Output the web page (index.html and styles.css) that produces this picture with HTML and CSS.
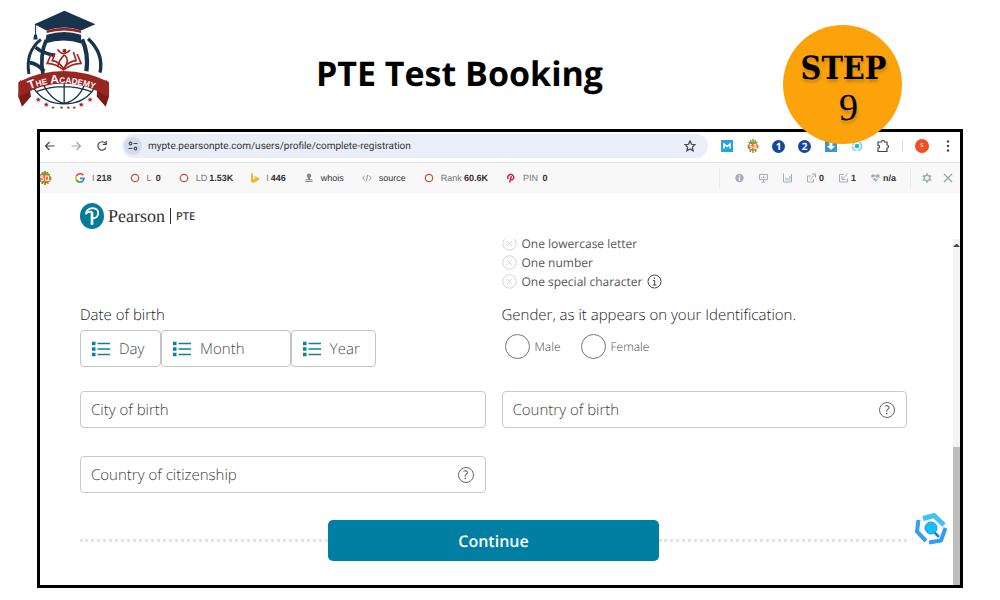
FILE: index.html
```html
<!DOCTYPE html>
<html lang="en">
<head>
  <meta charset="UTF-8">
  <meta name="viewport" content="width=device-width, initial-scale=1.0">
  <title>PTE Test Booking</title>
  <link rel="stylesheet" href="styles.css">
</head>
<body>
  <header class="top">
    <svg class="academy" viewBox="50 30 280 300" role="img" aria-label="The Academy">
      <!-- globe -->
      <g fill="none" stroke="#17344c">
        <path d="M122 118Q74 156 86 222" stroke-width="9"/>
        <path d="M138 120Q118 165 128 222" stroke-width="11"/>
        <path d="M246 118Q266 160 259 214" stroke-width="13"/>
        <path d="M264 116Q312 160 300 218" stroke-width="10"/>
        <path d="M106 142Q128 160 164 166M88 188Q110 190 132 214" stroke-width="11"/>
        <path d="M100 264Q130 312 192 312Q252 312 282 266M128 250Q150 300 192 311Q236 300 254 252M192 236V312M106 276Q190 244 276 276" stroke-width="4"/>
      </g>
      <!-- cap -->
      <path d="M102 72L193 32L286 72L243 91Q193 74 139 91Z" fill="#17344c"/>
      <path d="M106 72V104" stroke="#17344c" stroke-width="3"/>
      <path d="M102 103h8l2 15h-13z" fill="#17344c"/>
      <path d="M139 91Q193 75 243 91V99Q193 83 139 99Z" fill="#98241f"/>
      <path d="M139 104Q193 88 243 104V130Q193 112 134 130Z" fill="#17344c"/>
      <!-- book and reader -->
      <g fill="none" stroke="#a3251f" stroke-width="5">
        <path d="M153 162L141 190Q166 190 190 210Q216 190 243 190L231 162"/>
        <path d="M164 160L156 182Q176 184 190 206Q204 184 228 182L220 156"/>
        <path d="M172 148Q188 172 210 150M193 164Q176 182 173 198M194 166Q210 178 192 206"/>
      </g>
      <circle cx="193" cy="152" r="6" fill="#a3251f"/>
      <!-- ribbon -->
      <path d="M60 240L54 290L65 321L92 290L88 262ZM320 240L327 290L317 321L290 290L292 262Z" fill="#7d1a18"/>
      <path d="M54 246Q190 180 327 246V294L322 289Q190 212 60 289L54 294Z" fill="#9a2622"/>
      <path id="ribbon" d="M88 268Q190 226 310 278" fill="none"/>
      <text class="academy-name"><textPath href="#ribbon">The Academy</textPath></text>
      <g class="stars">
        <text x="104" y="306">★</text><text x="128" y="320">★</text><text x="152" y="327" class="tiny">★</text>
        <text x="178" y="328" class="tiny">★</text><text x="198" y="328" class="tiny">★</text><text x="216" y="327" class="tiny">★</text>
        <text x="234" y="320">★</text><text x="260" y="306">★</text>
      </g>
    </svg>
    <h1>PTE Test Booking</h1>
    <div class="step"><span class="step-word">STEP</span><span class="step-number">9</span></div>
  </header>

  <main class="browser">
    <div class="toolbar">
      <button class="icon-btn" aria-label="Back"><svg width="12" height="12" viewBox="0 0 12 12"><path d="M10.500 6H2M5.500 2L1.500 6l4 4" class="line"/></svg></button>
      <button class="icon-btn pale" aria-label="Forward"><svg width="12" height="12" viewBox="0 0 12 12"><path d="M1.500 6H10M6.500 2l4 4-4 4" class="line"/></svg></button>
      <button class="icon-btn" aria-label="Reload"><svg width="12" height="12" viewBox="0 0 12 12"><path d="M10 7.500A4.200 4.200 0 1 1 9.500 3.500M10.200 1v3.500H6.800" class="line"/></svg></button>
      <div class="address">
        <span class="site"><svg width="10" height="10" viewBox="0 0 10 10"><g class="line"><circle cx="2.500" cy="2.500" r="1.300"/><path d="M5.500 2.500h4M.500 7.500h4"/><circle cx="7.500" cy="7.500" r="1.300"/></g></svg></span>
        <input type="text" aria-label="Address" value="mypte.pearsonpte.com/users/profile/complete-registration">
        <button class="icon-btn" aria-label="Bookmark"><svg width="12" height="12" viewBox="0 0 12 12"><path d="M6 1l1.500 3.300 3.500.400-2.600 2.400.700 3.600L6 8.900l-3.100 1.800.700-3.600L1 4.700l3.500-.400z" class="line"/></svg></button>
      </div>
      <button class="icon-btn" aria-label="Mail extension"><svg width="14" height="14" viewBox="0 0 14 14"><path fill="#2ba3d8" d="M1 1h12v12H1z"/><path d="M4 9.500V5l3 2.500L10 5v4.500" stroke="#fff" stroke-width="1.500" fill="none"/></svg></button>
      <button class="icon-btn" aria-label="SEO extension"><svg width="14" height="14" viewBox="0 0 14 14"><path d="M4.500 1l1 3M9.500 1l-1 3M7 0v4M2.500 3l3 2M11.500 3l-3 2M4 13l1-3M10 13l-1-3M7 14v-4" stroke="#5cab36" stroke-width="1.500"/><ellipse cx="7" cy="7.500" rx="5.500" ry="4" fill="#f26a21"/><path d="M6 5.500H4v2h2v2H4M8 5.500h2v4H8zM9.500 8.500l1 1.500" stroke="#fff" fill="none"/></svg></button>
      <button class="icon-btn" aria-label="Extension one"><span class="num">1</span></button>
      <button class="icon-btn" aria-label="Extension two"><span class="num">2</span></button>
      <button class="icon-btn" aria-label="Download extension"><svg width="14" height="14" viewBox="0 0 14 14"><path fill="#3b96d6" d="M1 1h12v12H1z"/><path d="M5.500 3h3v4H11l-4 4-4-4h2.500z" fill="#fff"/></svg></button>
      <button class="icon-btn" aria-label="Search extension"><svg width="14" height="14" viewBox="0 0 14 14"><circle cx="7" cy="7" r="4.500" fill="none" stroke="#7bcff0" stroke-width="1.500" stroke-dasharray="6 1.500"/><circle cx="7" cy="7" r="2.300" fill="#24b3ee"/></svg></button>
      <button class="icon-btn" aria-label="Extensions"><svg width="14" height="14" viewBox="0 0 14 14"><path d="M2 3h3.500a1.500 1.500 0 0 1 3 0H11v3a1.500 1.500 0 0 1 0 3v3.500H2V9.200a1.500 1.500 0 0 0 0-3z" class="line"/></svg></button>
      <span class="divider"></span>
      <button class="icon-btn" aria-label="Profile"><span class="avatar">s</span></button>
      <button class="icon-btn" aria-label="Menu"><svg width="14" height="14" viewBox="0 0 14 14" fill="#444"><circle cx="7" cy="2.500" r="1.200"/><circle cx="7" cy="7" r="1.200"/><circle cx="7" cy="11.500" r="1.200"/></svg></button>
    </div>

    <div class="seobar">
      <svg class="seo-logo" width="12" height="14" viewBox="2 0 12 14"><path d="M4.500 1l1 3M9.500 1l-1 3M7 0v4M2.500 3l3 2M11.500 3l-3 2M4 13l1-3M10 13l-1-3M7 14v-4" stroke="#5cab36" stroke-width="2"/><ellipse cx="7" cy="7.500" rx="6.500" ry="4.500" fill="#f26a21"/><path d="M5.500 5H3v2h2.500v2.500H3M7.500 5h3v4.500h-3zM9.500 8l2 2" stroke="#fff" fill="none"/></svg>
      <div class="stats">
        <span class="stat"><svg width="10" height="10" viewBox="0 0 10 10" fill="none" stroke-width="1.700"><path d="M8.300 2.200A4 4 0 0 0 1.500 3" stroke="#e24a3b"/><path d="M1.500 3a4 4 0 0 0 0 4" stroke="#f2b824"/><path d="M1.500 7A4 4 0 0 0 7.700 8" stroke="#38a457"/><path d="M7.700 8A4 4 0 0 0 9 5.300H5" stroke="#4285d8"/></svg><span>I<b>218</b></span></span>
        <span class="stat"><svg width="10" height="10" viewBox="0 0 10 10"><circle cx="5" cy="5" r="3.700" class="ring"/></svg><span>L <b>0</b></span></span>
        <span class="stat"><svg width="10" height="10" viewBox="0 0 10 10"><circle cx="5" cy="5" r="3.700" class="ring"/></svg><span>LD<b>1.53K</b></span></span>
        <span class="stat"><svg width="8" height="10" viewBox="0 0 8 10"><path d="M0 0l2 .800v5.500l2.300-1L3 3l5 2v2L2 10 0 8.800z" fill="#f0b92d"/></svg><span>I<b>446</b></span></span>
        <span class="stat"><svg width="10" height="10" viewBox="0 0 10 10" fill="#7d8b8b"><circle cx="5" cy="2.700" r="2.200"/><path d="M4 4.500h2v1.700h2.500v1h-7v-1H4zM1.500 8h7v1h-7z"/></svg><span class="dark">whois</span></span>
        <span class="stat"><svg width="10" height="10" viewBox="0 0 10 10"><path d="M3 2.500L.800 5 3 7.500M7 2.500L9.200 5 7 7.500M5.700 2L4.300 8" fill="none" stroke="#8b9494"/></svg><span class="dark">source</span></span>
        <span class="stat"><svg width="10" height="10" viewBox="0 0 10 10"><circle cx="5" cy="5" r="3.700" class="ring"/></svg><span>Rank<b>60.6K</b></span></span>
        <span class="stat"><svg width="10" height="10" viewBox="0 0 10 10" fill="none" stroke="#c22b43"><path d="M2.200 6A3 3 0 1 1 7.500 5.500Q6.500 7.500 5 6.300M5.300 3L3.700 9.500" stroke-width="1.500"/></svg><span>PIN <b>0</b></span></span>
      </div>
      <div class="tools">
        <svg width="9" height="10" viewBox="0 0 9 10"><circle cx="4.500" cy="5" r="4.200" fill="#a3b0b7"/><path d="M4.500 4.300V8M4.500 2.300v1.200" stroke="#fff" stroke-width="1.300"/></svg>
        <svg width="9" height="10" viewBox="0 0 9 10"><path d="M.500 1.500h8v5h-8zM4.500 6.500V9M2.500 9h4M3 5V4M4.500 5V3M6 5V4" class="gray"/></svg>
        <svg width="9" height="10" viewBox="0 0 9 10"><path d="M.500.500v8.500h8V1M3 7.500V4.500M5 7.500V5M7 7.500V3" class="gray"/></svg>
        <span class="tool"><svg width="9" height="10" viewBox="0 0 9 10"><path d="M4 3H.500v6h6V6M3 6.500L8.300 1.300M5 1h3.500v3.500" class="gray"/></svg><b>0</b></span>
        <span class="tool"><svg width="9" height="10" viewBox="0 0 9 10"><path d="M5 1.500H.500v7.500h8V5.500M8.500.700L3.500 6M3 3v3.500h3.500" class="gray"/></svg><b>1</b></span>
        <span class="tool"><svg width="9" height="10" viewBox="0 0 9 10"><path d="M4.500 9L.500 4.500Q-.500 1.500 2.300 1.300 4 1.200 4.500 2.800 5 1.200 6.700 1.300 9.500 1.500 8.500 4.500z" fill="#a3b0b7"/><path d="M1 5h2l1-1.500L5 6l1-1h2" stroke="#fff" fill="none"/></svg><b>n/a</b></span>
      </div>
      <div class="tools last">
        <svg width="10" height="10" viewBox="0 0 10 10"><circle cx="5" cy="5" r="2.700" fill="none" stroke="#a3b0b7" stroke-width="1.500"/><path d="M5 .300v1.700M5 8v1.700M.900 2.700l1.500.900M7.600 6.400l1.500.900M.900 7.300l1.500-.900M7.600 3.600l1.500-.900" stroke="#a3b0b7" stroke-width="2"/></svg>
        <svg width="10" height="10" viewBox="0 0 10 10"><path d="M1 1l8 8M9 1L1 9" fill="none" stroke="#98a4aa" stroke-width="1.300"/></svg>
      </div>
    </div>

    <div class="brand">
      <svg width="24" height="26" viewBox="0 0 24 26"><ellipse cx="12" cy="13" rx="12" ry="13" fill="#057b9b"/><path d="M6 10.500Q7 5.500 12.500 5.200Q18.500 5.500 18.200 10.500Q17.500 15.500 12.300 15.300M6 10.500Q8 8.500 11.500 8.700" fill="none" stroke="#fff" stroke-width="1.800" stroke-linecap="round"/><path d="M12 9v10.500" stroke="#fff" stroke-width="2.600"/><circle cx="12" cy="20.500" r="1.500" fill="#fff"/></svg>
      <span class="brand-name">Pearson</span><span class="brand-bar"></span><span class="brand-sub">PTE</span>
    </div>

    <div class="page">
      <form class="form">
        <ul class="rules">
          <li><svg width="15" height="15" viewBox="0 0 15 15" class="cross"><circle cx="7.500" cy="7.500" r="6.700"/><path d="M5 5l5 5M10 5l-5 5"/></svg>One lowercase letter</li>
          <li><svg width="15" height="15" viewBox="0 0 15 15" class="cross"><circle cx="7.500" cy="7.500" r="6.700"/><path d="M5 5l5 5M10 5l-5 5"/></svg>One number</li>
          <li><svg width="15" height="15" viewBox="0 0 15 15" class="cross"><circle cx="7.500" cy="7.500" r="6.700"/><path d="M5 5l5 5M10 5l-5 5"/></svg>One special character
            <svg width="15" height="15" viewBox="0 0 15 15" class="info"><circle cx="7.500" cy="7.500" r="6.500"/><path d="M6 6.500h1.700V11M5.800 11h3.700M7.500 3.500V5"/></svg></li>
        </ul>

        <fieldset class="birth">
          <legend>Date of birth</legend>
          <div class="dates">
            <label class="date day"><svg width="18" height="16" viewBox="0 0 18 16" class="list"><path d="M5.500 2.500H18M5.500 8H18M5.500 13.500H18"/><path d="M0 2.500h3.500M0 8h3.500M0 13.500h3.500" class="dots"/></svg><select aria-label="Day"><option>Day</option></select></label>
            <label class="date month"><svg width="18" height="16" viewBox="0 0 18 16" class="list"><path d="M5.500 2.500H18M5.500 8H18M5.500 13.500H18"/><path d="M0 2.500h3.500M0 8h3.500M0 13.500h3.500" class="dots"/></svg><select aria-label="Month"><option>Month</option></select></label>
            <label class="date year"><svg width="18" height="16" viewBox="0 0 18 16" class="list"><path d="M5.500 2.500H18M5.500 8H18M5.500 13.500H18"/><path d="M0 2.500h3.500M0 8h3.500M0 13.500h3.500" class="dots"/></svg><select aria-label="Year"><option>Year</option></select></label>
          </div>
        </fieldset>

        <fieldset class="gender">
          <legend>Gender, as it appears on your Identification.</legend>
          <div class="radios">
            <label><input type="radio" name="gender">Male</label>
            <label><input type="radio" name="gender">Female</label>
          </div>
        </fieldset>

        <div class="field"><input type="text" aria-label="City of birth" placeholder="City of birth"></div>
        <div class="field"><input type="text" aria-label="Country of birth" placeholder="Country of birth">
          <button type="button" class="help" aria-label="Help">?</button></div>
        <div class="field citizen"><input type="text" aria-label="Country of citizenship" placeholder="Country of citizenship">
          <button type="button" class="help" aria-label="Help">?</button></div>

        <div class="actions"><button type="button" class="continue">Continue</button></div>
      </form>
      <div class="scrollbar"><span class="up"></span><span class="thumb"></span></div>
    </div>

    <button class="finder" aria-label="Search"><svg width="34" height="34" viewBox="0 0 34 34">
      <g fill="none" stroke-width="4"><path d="M9 6.500L20 3.500 30 13" stroke="#43c3f3" stroke-width="5"/><path d="M4.500 8L3 19.500 12 29" stroke="#3a9bf0"/><path d="M15 30.500l12-2L31.500 16" stroke="#2f9df4"/></g>
      <path d="M20 20l5 5" stroke="#1880dc" stroke-width="2.500"/><circle cx="17" cy="16" r="6" fill="#12c1fb" stroke="#2496e8"/></svg></button>
  </main>
</body>
</html>
```
FILE: styles.css
```css
* {
  box-sizing: border-box;
}

body {
  margin: 0;
  background: #fff;
  color: #4a4a4a;
  font-family: "Open Sans", sans-serif;
  text-rendering: geometricPrecision;
}

button, input, select {
  font: inherit;
  color: inherit;
  margin: 0;
  padding: 0;
  border: none;
  background: none;
  text-rendering: inherit;
}

svg {
  display: block;
  flex: none;
}

/* Heading */
.top {
  position: relative;
  display: grid;
  grid-template-columns: 1fr auto 1fr;
  height: 129px;
  padding: 10px 98px 0 17px;
}

.academy {
  width: 93px;
  height: 100px;
}

.academy-name {
  font-family: "Liberation Sans", sans-serif;
  font-weight: bold;
  font-size: 36px;
  font-variant: small-caps;
  fill: #fff;
}

.stars {
  font-family: "DejaVu Sans", sans-serif;
  font-size: 22px;
  fill: #a3251f;
}

.stars .tiny {
  font-size: 14px;
}

h1 {
  margin: 0;
  padding-top: 39px;
  color: #000;
  font-size: 34px;
  font-weight: 700;
  line-height: 48px;
}

.step {
  position: absolute;
  top: 25px;
  right: 98px;
  z-index: 2;
  width: 119px;
  height: 119px;
  border-radius: 50%;
  background: #fca30b;
  color: #000;
  font-family: "Liberation Serif", serif;
  text-align: center;
  text-shadow: 1px 3px 3px rgba(0, 0, 0, 0.2);
}

.step-word, .step-number {
  display: block;
  line-height: 40px;
}

.step-word {
  padding: 23px 0 0 2px;
  font-family: "DejaVu Serif Condensed", "DejaVu Serif", serif;
  font-size: 32px;
  font-weight: bold;
}

.step-number {
  padding-left: 12px;
  font-size: 38px;
}

/* Browser window */
.browser {
  position: relative;
  margin: 0 37px 12px;
  border: 3px solid #000;
}

.toolbar {
  display: flex;
  align-items: center;
  gap: 12px;
  height: 31px;
  padding: 0 5px 2px 4px;
  border-bottom: 1px solid #e2e2e2;
}

.icon-btn {
  display: block;
  color: #444;
}

.icon-btn:nth-child(-n+2) {
  margin-right: 2px;
}

.icon-btn.pale {
  color: #a5a5a5;
}

.line {
  fill: none;
  stroke: currentColor;
  stroke-width: 1.2;
}

.address {
  display: flex;
  align-items: center;
  flex: 1;
  gap: 6px;
  height: 24px;
  margin-left: 2px;
  padding: 0 12px 0 2px;
  border-radius: 12px;
  background: #e9eef9;
}

.address input {
  flex: 1;
  min-width: 0;
  color: #333;
  font-family: Roboto, sans-serif;
  font-size: 10px;
}

.site {
  display: grid;
  place-items: center;
  width: 18px;
  height: 18px;
  border-radius: 50%;
  background: #d5dbea;
}

.num, .avatar {
  display: block;
  width: 13px;
  height: 13px;
  border-radius: 50%;
  background: #17479d;
  color: #fff;
  font-size: 10px;
  font-weight: bold;
  line-height: 13px;
  text-align: center;
}

.num {
  margin-right: 1px;
}

.avatar {
  width: 14px;
  height: 14px;
  background: #ef4f22;
  font-size: 7px;
  font-weight: normal;
}

.divider {
  width: 1px;
  height: 12px;
  background: #d3dced;
}

/* SEO stats strip */
.seobar {
  display: flex;
  align-items: center;
  height: 30px;
  background: #f8f8f8;
  color: #777;
  font-family: "Liberation Sans", sans-serif;
  font-size: 9px;
}

.seobar b, .dark {
  color: #333;
}

.stats {
  display: flex;
  flex: 1;
  gap: 18px;
  padding-left: 23px;
}

.stat {
  display: flex;
  align-items: center;
  gap: 7px;
  white-space: nowrap;
}

.stat b {
  margin-left: 2px;
}

.ring {
  fill: none;
  stroke: #b5583f;
  stroke-width: 1.2;
}

.tools {
  display: flex;
  align-items: center;
  gap: 15px;
  height: 22px;
  padding: 0 14px 0 15px;
  border-left: 1px solid #ececec;
}

.tools.last {
  gap: 11px;
  padding: 0 7px 0 11px;
}

.tool {
  display: flex;
  align-items: center;
  gap: 3px;
}

.gray {
  fill: none;
  stroke: #a3b0b7;
}

/* Pearson header */
.brand {
  display: flex;
  align-items: center;
  height: 46px;
  padding-left: 40px;
  color: #333;
}

.brand-name {
  margin-left: 4px;
  font-family: "Liberation Serif", serif;
  font-size: 18px;
}

.brand-bar {
  width: 1px;
  height: 16px;
  margin: 0 5px;
  background: #333;
}

.brand-sub {
  font-family: "Noto Sans", sans-serif;
  font-size: 11px;
  font-weight: 500;
}

/* Scrolled page */
.page {
  display: flex;
  overflow: hidden;
}

.form {
  display: grid;
  grid-template-columns: 1fr 1fr;
  flex: 1;
  column-gap: 16px;
  padding: 0 46px 24px 40px;
  font-size: 15px;
  font-weight: 300;
}

.rules {
  grid-column: 2;
  margin: -5px 0 14px;
  padding: 0;
  list-style: none;
  color: #555;
  font-size: 12px;
  font-weight: 400;
}

.rules li {
  display: flex;
  align-items: center;
  gap: 5px;
  height: 19px;
}

.cross, .info {
  fill: none;
  stroke: #d5d5d5;
}

.rules .info {
  stroke: #444;
}

fieldset {
  min-width: 0;
  margin: 0;
  padding: 0;
  border: none;
}

legend {
  height: 20px;
  margin-bottom: 5px;
  padding: 0;
  color: #222;
  line-height: 20px;
}

.dates {
  display: flex;
}

.date {
  display: flex;
  align-items: center;
  gap: 9px;
  height: 37px;
  padding-left: 11px;
  border: 1px solid #c4c4c4;
  border-radius: 4px;
}

.day {
  width: 20%;
}

.month {
  width: 32%;
}

.year {
  width: 21%;
}

.date select {
  flex: 1;
  min-width: 0;
  appearance: none;
}

.list {
  fill: none;
  stroke: #117f9c;
  stroke-width: 1.5;
}

.list .dots {
  stroke-width: 3.5;
}

.radios {
  display: flex;
  gap: 20px;
  padding: 4px 0 0 3px;
  font-size: 12px;
}

.radios label {
  display: flex;
  align-items: center;
  gap: 5px;
}

.radios input {
  width: 25px;
  height: 25px;
  border: 1px solid #777;
  border-radius: 50%;
  appearance: none;
}

.field {
  display: flex;
  align-items: center;
  height: 37px;
  margin-top: 24px;
  padding: 0 11px 0 10px;
  border: 1px solid #c9c9c9;
  border-radius: 4px;
}

.field input {
  flex: 1;
  min-width: 0;
}

.field input::placeholder {
  color: #3d3d3d;
  opacity: 1;
}

.help {
  width: 16px;
  height: 16px;
  border: 1px solid #666;
  border-radius: 50%;
  font-size: 12px;
  font-weight: 400;
  line-height: 14px;
}

.citizen {
  margin-top: 28px;
}

.actions {
  display: flex;
  grid-column: 1 / 3;
  align-items: center;
  margin-top: 27px;
}

.actions::before, .actions::after {
  content: "";
  flex: 1;
  border-top: 3px dotted #e3e3e3;
}

.continue {
  flex: 0 0 40%;
  height: 41px;
  border-radius: 5px;
  background: #007fa3;
  color: #fff;
  font-size: 16px;
  font-weight: 600;
}

.scrollbar {
  display: flex;
  flex-direction: column;
  justify-content: space-between;
  width: 7px;
  background: #f3f3f3;
}

.up {
  margin-top: 5px;
  border: 3px solid transparent;
  border-top: none;
  border-bottom-color: #444;
}

.thumb {
  height: 40%;
  background: #bdbdbd;
}

.finder {
  position: absolute;
  right: 12px;
  bottom: 39px;
}
```
